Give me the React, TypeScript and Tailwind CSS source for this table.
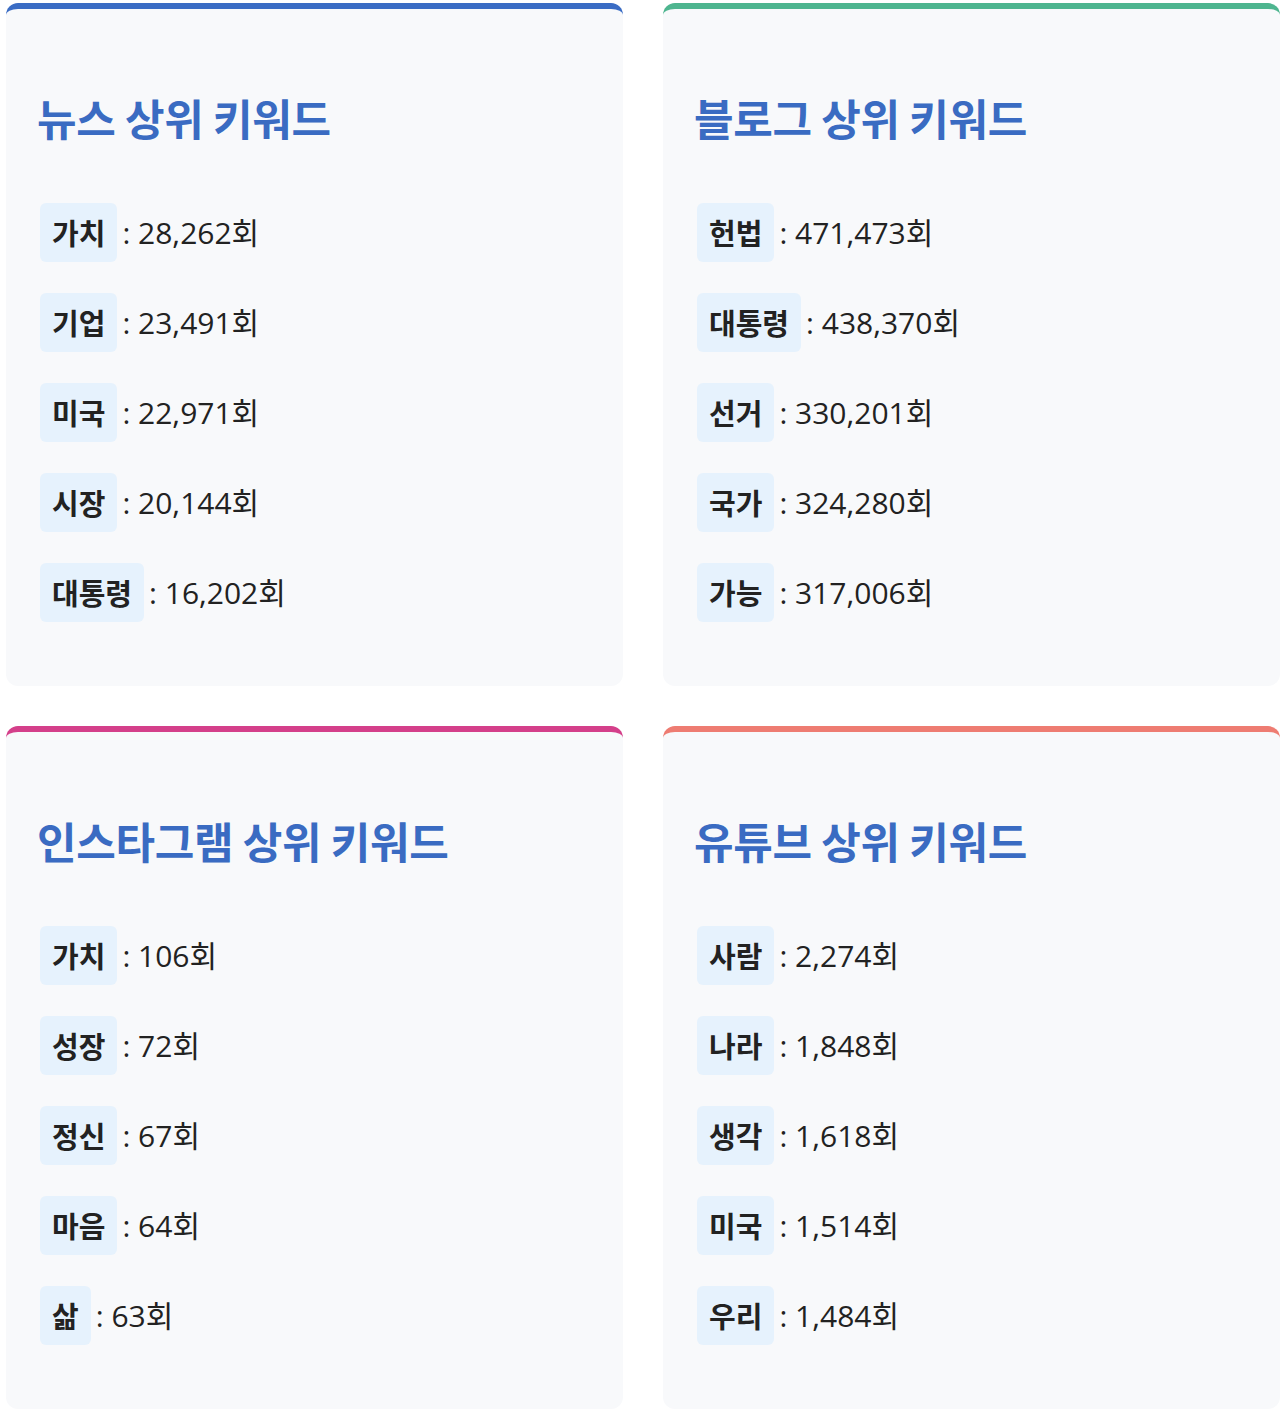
type Item = { word: string; count: string };

type Card = {
  title: string;
  border: string;
  items: Item[];
};

const cards: Card[] = [
  {
    title: "뉴스 상위 키워드",
    border: "border-t-[#3a6cc4]",
    items: [
      { word: "가치", count: "28,262" },
      { word: "기업", count: "23,491" },
      { word: "미국", count: "22,971" },
      { word: "시장", count: "20,144" },
      { word: "대통령", count: "16,202" },
    ],
  },
  {
    title: "블로그 상위 키워드",
    border: "border-t-[#4eb58f]",
    items: [
      { word: "헌법", count: "471,473" },
      { word: "대통령", count: "438,370" },
      { word: "선거", count: "330,201" },
      { word: "국가", count: "324,280" },
      { word: "가능", count: "317,006" },
    ],
  },
  {
    title: "인스타그램 상위 키워드",
    border: "border-t-[#d43f8a]",
    items: [
      { word: "가치", count: "106" },
      { word: "성장", count: "72" },
      { word: "정신", count: "67" },
      { word: "마음", count: "64" },
      { word: "삶", count: "63" },
    ],
  },
  {
    title: "유튜브 상위 키워드",
    border: "border-t-[#ee7c72]",
    items: [
      { word: "사람", count: "2,274" },
      { word: "나라", count: "1,848" },
      { word: "생각", count: "1,618" },
      { word: "미국", count: "1,514" },
      { word: "우리", count: "1,484" },
    ],
  },
];

function KeywordCard({ card }: { card: Card }) {
  return (
    <div
      className={`rounded-xl border-t-[6px] bg-[#f8f9fb] px-[31px] pt-[82px] pb-[64px] ${card.border}`}
    >
      <h2 className="text-[43px] font-bold leading-[52px] tracking-[-0.3px] text-[#3a6bc2]">
        {card.title}
      </h2>
      <ul className="mt-[60px] flex flex-col gap-[31px]">
        {card.items.map((it) => (
          <li key={it.word} className="flex items-center pl-[3px]">
            <span className="rounded-md bg-[#e6f2fd] px-3 py-2 text-[29px] font-bold leading-[43px] text-[#222]">
              {it.word}
            </span>
            <span
              className="ml-[5px] text-[30px] leading-[43px] text-[#222]"
              style={{ fontFamily: '"Open Sans", "Noto Sans CJK KR", sans-serif' }}
            >
              : {it.count}회
            </span>
          </li>
        ))}
      </ul>
    </div>
  );
}

export default function App() {
  return (
    <div
      className="min-h-[1413px] bg-white pl-[6px] pt-[3px]"
      style={{ fontFamily: '"Noto Sans CJK KR", "Noto Sans", sans-serif' }}
    >
      <div className="grid grid-cols-2 gap-x-10 gap-y-10">
        {cards.map((c) => (
          <KeywordCard key={c.title} card={c} />
        ))}
      </div>
    </div>
  );
}
